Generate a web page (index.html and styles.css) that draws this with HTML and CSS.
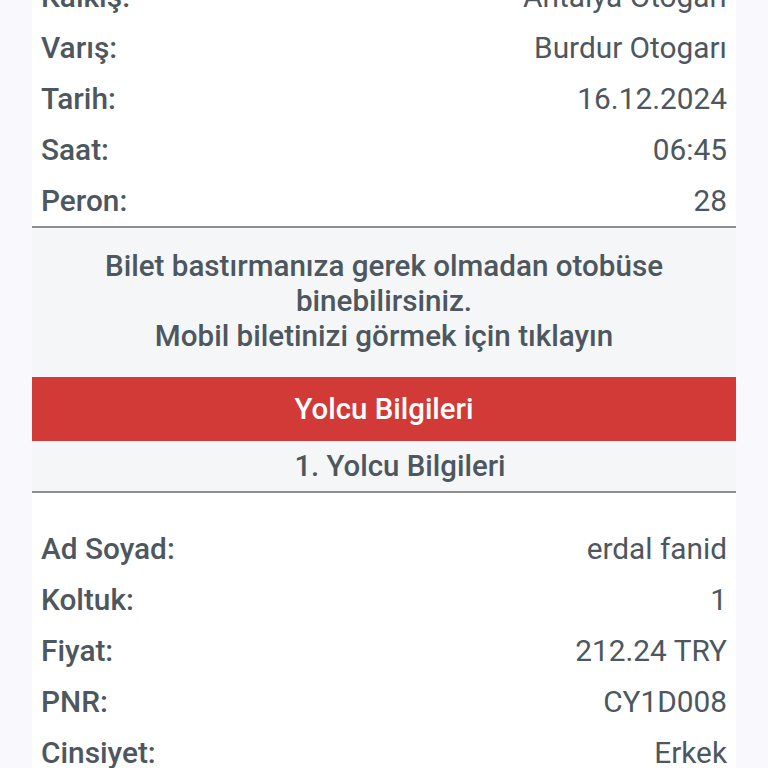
FILE: index.html
```html
<!DOCTYPE html>
<html lang="tr">
<head>
<meta charset="utf-8">
<title>Bilet</title>
<link rel="stylesheet" href="styles.css">
</head>
<body>
<div class="ticket">
  <div class="rows top">
    <div class="row"><span class="label">Kalkış:</span><span class="value">Antalya Otogarı</span></div>
    <div class="row"><span class="label">Varış:</span><span class="value">Burdur Otogarı</span></div>
    <div class="row"><span class="label">Tarih:</span><span class="value">16.12.2024</span></div>
    <div class="row"><span class="label">Saat:</span><span class="value">06:45</span></div>
    <div class="row"><span class="label">Peron:</span><span class="value">28</span></div>
  </div>
  <div class="notice">
    <p>Bilet bastırmanıza gerek olmadan otobüse binebilirsiniz.</p>
    <p>Mobil biletinizi görmek için tıklayın</p>
  </div>
  <div class="section-title">Yolcu Bilgileri</div>
  <div class="sub-title">1. Yolcu Bilgileri</div>
  <div class="rows passenger">
    <div class="row"><span class="label">Ad Soyad:</span><span class="value">erdal fanid</span></div>
    <div class="row"><span class="label">Koltuk:</span><span class="value">1</span></div>
    <div class="row"><span class="label">Fiyat:</span><span class="value">212.24 TRY</span></div>
    <div class="row"><span class="label">PNR:</span><span class="value">CY1D008</span></div>
    <div class="row"><span class="label">Cinsiyet:</span><span class="value">Erkek</span></div>
  </div>
</div>
</body>
</html>
```
FILE: styles.css
```css
html, body {
  margin: 0;
  padding: 0;
  background: #f9f9fd;
  height: 768px;
  overflow: hidden;
}
body {
  font-family: Roboto, "Noto Sans", sans-serif;
  color: #4d575d;
}
.ticket {
  margin: -29px 0 0 32px;
  width: 704px;
  background: #ffffff;
}
.rows {
  display: flex;
  flex-direction: column;
}
.row {
  height: 51px;
  padding: 0 9px;
  display: flex;
  justify-content: space-between;
  align-items: center;
  font-size: 29.8px;
}
.label {
  font-weight: 500;
}
.value {
  font-weight: 400;
}
.top {
  border-bottom: 2px solid #8e8e8e;
}
.notice {
  background: #f4f6f8;
  padding: 21px 40px 23px;
  text-align: center;
  font-size: 29.6px;
  font-weight: 500;
  line-height: 35px;
}
.notice p {
  margin: 0;
}
.section-title {
  background: #d23a37;
  color: #ffffff;
  height: 64px;
  display: flex;
  align-items: center;
  justify-content: center;
  font-size: 29.4px;
  font-weight: 500;
}
.sub-title {
  background: #f4f6f8;
  height: 50px;
  padding-left: 32px;
  display: flex;
  align-items: center;
  justify-content: center;
  font-size: 29.4px;
  font-weight: 500;
  border-bottom: 2px solid #8e8e8e;
}
.passenger {
  padding-top: 30px;
}
```
